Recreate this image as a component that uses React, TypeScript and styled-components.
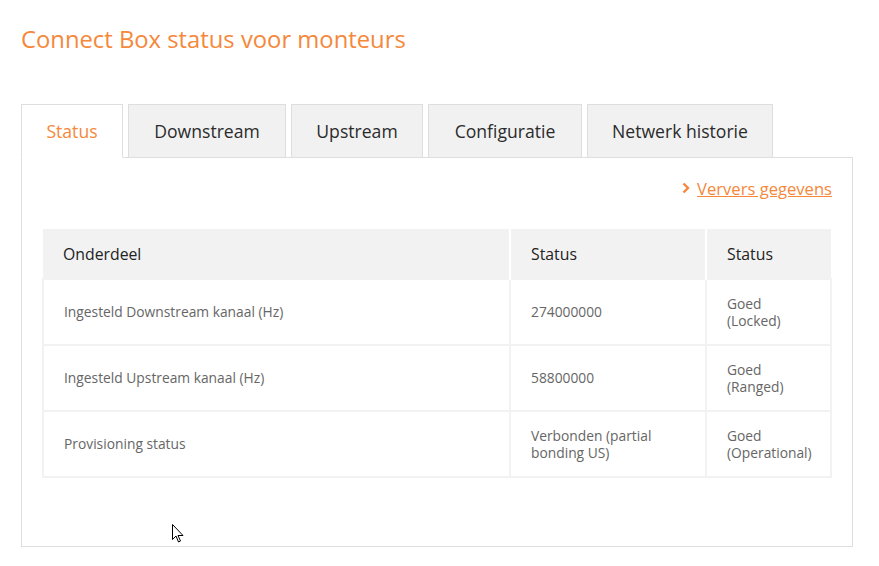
import React from "react";
import styled, {createGlobalStyle} from "styled-components";

const GlobalStyle = createGlobalStyle`
  body {
    margin: 0;
    background: #fff;
    font-family: "Open Sans", "Liberation Sans", sans-serif;
  }
`;

const orange = "#f5883b";

const Page = styled.div`
  position: relative;
  padding: 23px 26px 0 21px;
  width: 879px;
  height: 566px;
  box-sizing: border-box;
`;

const Title = styled.h1`
  margin: 0;
  color: ${orange};
  font-size: 23.8px;
  font-weight: 400;
  line-height: 32px;
`;

const Tabs = styled.div`
  display: flex;
  gap: 5px;
  margin-top: 49px;
  margin-bottom: -1px;
  position: relative;
  z-index: 1;
`;

const Tab = styled.div<{ active?: boolean; width: number }>`
  width: ${p => p.width}px;
  height: 54px;
  box-sizing: border-box;
  display: flex;
  align-items: center;
  justify-content: center;
  padding-bottom: 1px;
  font-size: 17.6px;
  color: ${p => (p.active ? orange : "#2b2b2b")};
  background: ${p => (p.active ? "#fff" : "#f1f1f1")};
  border: 1px solid #dedede;
  border-bottom-color: ${p => (p.active ? "#fff" : "#dedede")};
`;

const Panel = styled.div`
  width: 832px;
  height: 390px;
  box-sizing: border-box;
  border: 1px solid #dedede;
  padding: 18px 20px 0 20px;
`;

const LinkRow = styled.div`
  display: flex;
  justify-content: flex-end;
  align-items: center;
  gap: 7px;
  height: 24px;
  margin-bottom: 29px;
`;

const RefreshLink = styled.a`
  color: ${orange};
  font-size: 16.6px;
  text-decoration: underline;
`;

const Table = styled.table`
  width: 788px;
  border-collapse: collapse;
  table-layout: fixed;
`;

const Th = styled.th<{ width: number }>`
  box-sizing: border-box;
  width: ${p => p.width}px;
  height: 50px;
  background: #f2f2f2;
  text-align: left;
  font-weight: 400;
  font-size: 15.8px;
  color: #222;
  padding: 0 20px;
  border-right: 2px solid #fff;
  &:last-child {
    border-right: none;
  }
`;

const Td = styled.td`
  height: 63px;
  border: 2px solid #f2f2f2;
  padding: 0 20px 1px;
  font-size: 13.8px;
  line-height: 17px;
  color: #666;
  vertical-align: middle;
`;

const Cursor = styled.svg`
  position: absolute;
  left: 172px;
  top: 524px;
`;

const tabs = [
    {label: "Status", width: 102},
    {label: "Downstream", width: 158},
    {label: "Upstream", width: 132},
    {label: "Configuratie", width: 154},
    {label: "Netwerk historie", width: 186},
];

const rows = [
    ["Ingesteld Downstream kanaal (Hz)", "274000000", "Goed\n(Locked)"],
    ["Ingesteld Upstream kanaal (Hz)", "58800000", "Goed\n(Ranged)"],
    ["Provisioning status", "Verbonden (partial\nbonding US)", "Goed\n(Operational)"],
];

function Multi(props: { text: string }) {
    const parts = props.text.split("\n");
    return (
        <>
            {parts.map((p, i) => (
                <React.Fragment key={i}>
                    {i > 0 && <br/>}
                    {p}
                </React.Fragment>
            ))}
        </>
    );
}

function App() {
    return (
        <Page>
            <GlobalStyle/>
            <Title>Connect Box status voor monteurs</Title>
            <Tabs>
                {tabs.map((t, i) => (
                    <Tab key={t.label} active={i === 0} width={t.width}>{t.label}</Tab>
                ))}
            </Tabs>
            <Panel>
                <LinkRow>
                    <svg width="8" height="12" viewBox="0 0 8 12">
                        <path d="M1.5 1.5 L6 6 L1.5 10.5" fill="none" stroke={orange} strokeWidth="2.4"/>
                    </svg>
                    <RefreshLink href="#">Ververs gegevens</RefreshLink>
                </LinkRow>
                <Table>
                    <thead>
                    <tr>
                        <Th width={467}>Onderdeel</Th>
                        <Th width={196}>Status</Th>
                        <Th width={125}>Status</Th>
                    </tr>
                    </thead>
                    <tbody>
                    {rows.map(r => (
                        <tr key={r[0]}>
                            {r.map((c, i) => (
                                <Td key={i}><Multi text={c}/></Td>
                            ))}
                        </tr>
                    ))}
                    </tbody>
                </Table>
            </Panel>
            <Cursor width="12" height="19" viewBox="0 0 12 19">
                <path d="M0.5 0.5 L0.5 15.5 L4 12 L6.5 18 L8.5 17 L6 11.5 L11 11.5 Z" fill="#fff" stroke="#000" strokeWidth="1"/>
            </Cursor>
        </Page>
    );
}

export default App;
